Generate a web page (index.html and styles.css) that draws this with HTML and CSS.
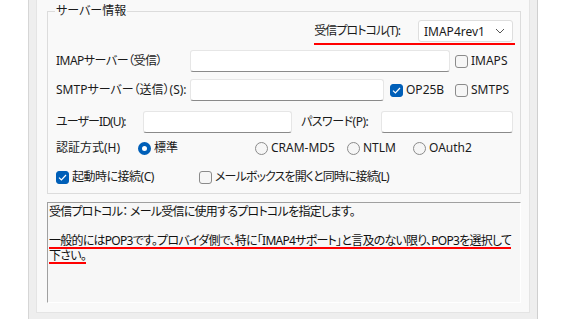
FILE: index.html
```html
<!DOCTYPE html>
<html lang="ja">
<head>
    <meta charset="UTF-8">
    <meta name="viewport" content="width=device-width, initial-scale=1.0">
    <title>サーバー情報</title>
    <link rel="stylesheet" href="styles.css">
</head>
<body>
    <div class="window">
        <div class="panel">
            <fieldset class="group">
                <legend>サーバー情報</legend>

                <div class="row row-proto">
                    <div class="proto">
                        <span class="label tight">受信プロトコル(T):</span>
                        <div class="select">
                            <span>IMAP4rev1</span>
                            <svg width="10" height="6" viewBox="0 0 10 6"><path d="M1 1 L5 5 L9 1" fill="none" stroke="#555" stroke-width="1"/></svg>
                        </div>
                    </div>
                </div>

                <div class="row row-imap">
                    <span class="label w-server narrow">IMAPサーバー（受信）</span>
                    <span class="input w-imap"></span>
                    <span class="check"><span class="box"></span>IMAPS</span>
                </div>

                <div class="row row-smtp">
                    <span class="label w-server">SMTPサーバー（送信）(S):</span>
                    <span class="input w-smtp"></span>
                    <span class="check w-op25b"><span class="box on"><svg width="9" height="7" viewBox="0 0 9 7"><path d="M1 3.6 L3.4 6 L8 1" fill="none" stroke="#fff" stroke-width="1.2"/></svg></span>OP25B</span>
                    <span class="check"><span class="box"></span>SMTPS</span>
                </div>

                <div class="row row-user">
                    <span class="label w-user tight">ユーザーID(U):</span>
                    <span class="input w-userid"></span>
                    <span class="label w-pass narrow">パスワード(P):</span>
                    <span class="input w-password"></span>
                </div>

                <div class="row row-auth">
                    <span class="label w-auth">認証方式(H)</span>
                    <span class="radio w-std"><span class="dot on"></span>標準</span>
                    <span class="radio w-cram"><span class="dot"></span>CRAM-MD5</span>
                    <span class="radio w-ntlm"><span class="dot"></span>NTLM</span>
                    <span class="radio"><span class="dot"></span>OAuth2</span>
                </div>

                <div class="row row-connect">
                    <span class="check w-start narrow"><span class="box on"><svg width="9" height="7" viewBox="0 0 9 7"><path d="M1 3.6 L3.4 6 L8 1" fill="none" stroke="#fff" stroke-width="1.2"/></svg></span>起動時に接続(C)</span>
                    <span class="check tight"><span class="box"></span>メールボックスを開くと同時に接続(L)</span>
                </div>
            </fieldset>

            <div class="memo">
                <div>受信プロトコル：&nbsp;メール受信に使用するプロトコルを指定します。</div>
                <div>&nbsp;</div>
                <div><span class="mark">一般的にはPOP3です。プロバイダ側で、特に「IMAP4サポート」と言及のない限り、POP3を選択して</span></div>
                <div><span class="mark">下さい。</span></div>
            </div>
        </div>
    </div>
</body>
</html>
```

FILE: styles.css
```css
*
{
  margin: 0;
  padding: 0;
  box-sizing: border-box;
}
body{
  background: #fff;
  font-family: "Noto Sans", "Noto Sans CJK JP", sans-serif;
  font-size: 12px;
  font-feature-settings: "palt";
  color: #1b1b1b;
}
.window{
  margin-left: 28px;
  width: 510px;
  height: 319px;
  padding-left: 7px;
  background: #eeeeee;
  border-left: 1px solid #d6d6d6;
  border-right: 1px solid #cfcfcf;
}
.panel{
  width: 494px;
  height: 313px;
  padding: 3px 0 0 10px;
  background: #f9f9f9;
  border: 1px solid #e4e4e4;
  border-top: none;
}

/* group box */
.group{
  width: 474px;
  min-width: 0;
  border: 1px solid #dcdcdc;
  padding: 0 0 8px 0;
}
.group legend{
  margin-left: 7px;
  padding: 0 1px;
  line-height: 16px;
}
.row{
  display: flex;
  align-items: center;
  padding-left: 8px;
  white-space: nowrap;
}
.label{
  line-height: 16px;
}
.narrow{ letter-spacing: -0.5px; }
.tight{ letter-spacing: -0.9px; }

.row-proto{
  justify-content: flex-end;
  padding-right: 5px;
  margin-top: 1px;
}
.proto{
  display: flex;
  align-items: center;
  padding: 0 2px 1px 0;
  border-bottom: 2px solid #f00;
}
.select{
  display: flex;
  align-items: center;
  justify-content: space-between;
  margin-left: 18px;
  width: 95px;
  height: 22px;
  padding: 0 7px 0 5px;
  background: #fff;
  border: 1px solid #dedede;
  border-radius: 3px;
  letter-spacing: 0;
}
.row-imap{ margin-top: 5px; }
.row-smtp{ margin-top: 7px; }
.row-user{ margin-top: 10px; }
.row-auth{ margin-top: 7px; height: 16px; }
.row-connect{ margin-top: 13px; height: 16px; }

.w-server{ width: 134px; }
.w-user{ width: 87px; }
.w-pass{ width: 80px; margin-left: 9px; }
.w-auth{ width: 82px; }

.input{
  display: block;
  height: 22px;
  background: #fff;
  border: 1px solid #e6e6e6;
  border-bottom-color: #8a8a8a;
  border-radius: 3px;
}
.w-imap{ width: 260px; margin-right: 5px; }
.w-smtp{ width: 194px; margin-right: 6px; }
.w-userid{ width: 149px; }
.w-password{ width: 132px; }

/* checkboxes and radios */
.check, .radio{
  display: flex;
  align-items: center;
  line-height: 16px;
}
.box{
  display: flex;
  justify-content: center;
  align-items: center;
  flex: none;
  width: 13px;
  height: 13px;
  margin-right: 3px;
  border: 1px solid #8b8b8b;
  border-radius: 3px;
  background: #f6f6f6;
}
.box.on{
  background: #005fb8;
  border-color: #005fb8;
}
.w-op25b{ width: 65px; }
.w-start{ width: 143px; }

.dot{
  flex: none;
  width: 13px;
  height: 13px;
  margin-right: 3px;
  border: 1px solid #8b8b8b;
  border-radius: 50%;
  background: #f6f6f6;
}
.dot.on{
  border: 4px solid #005fb8;
  background: #fff;
}
.w-std{ width: 117px; }
.w-cram{ width: 92px; }
.w-ntlm{ width: 66px; }

/* description box */
.memo{
  width: 474px;
  height: 101px;
  margin-top: 8px;
  padding: 1px 0 0 1px;
  background: #f7f7f7;
  border: 1px solid #a0a0a0;
  border-right-color: #fff;
  border-bottom-color: #fff;
  line-height: 15px;
  letter-spacing: -0.75px;
  color: #111;
  white-space: nowrap;
}
.memo div{
  height: 15px;
}
.mark{
  display: inline-block;
  vertical-align: top;
  line-height: 13px;
  border-bottom: 2px solid #f00;
}
```
